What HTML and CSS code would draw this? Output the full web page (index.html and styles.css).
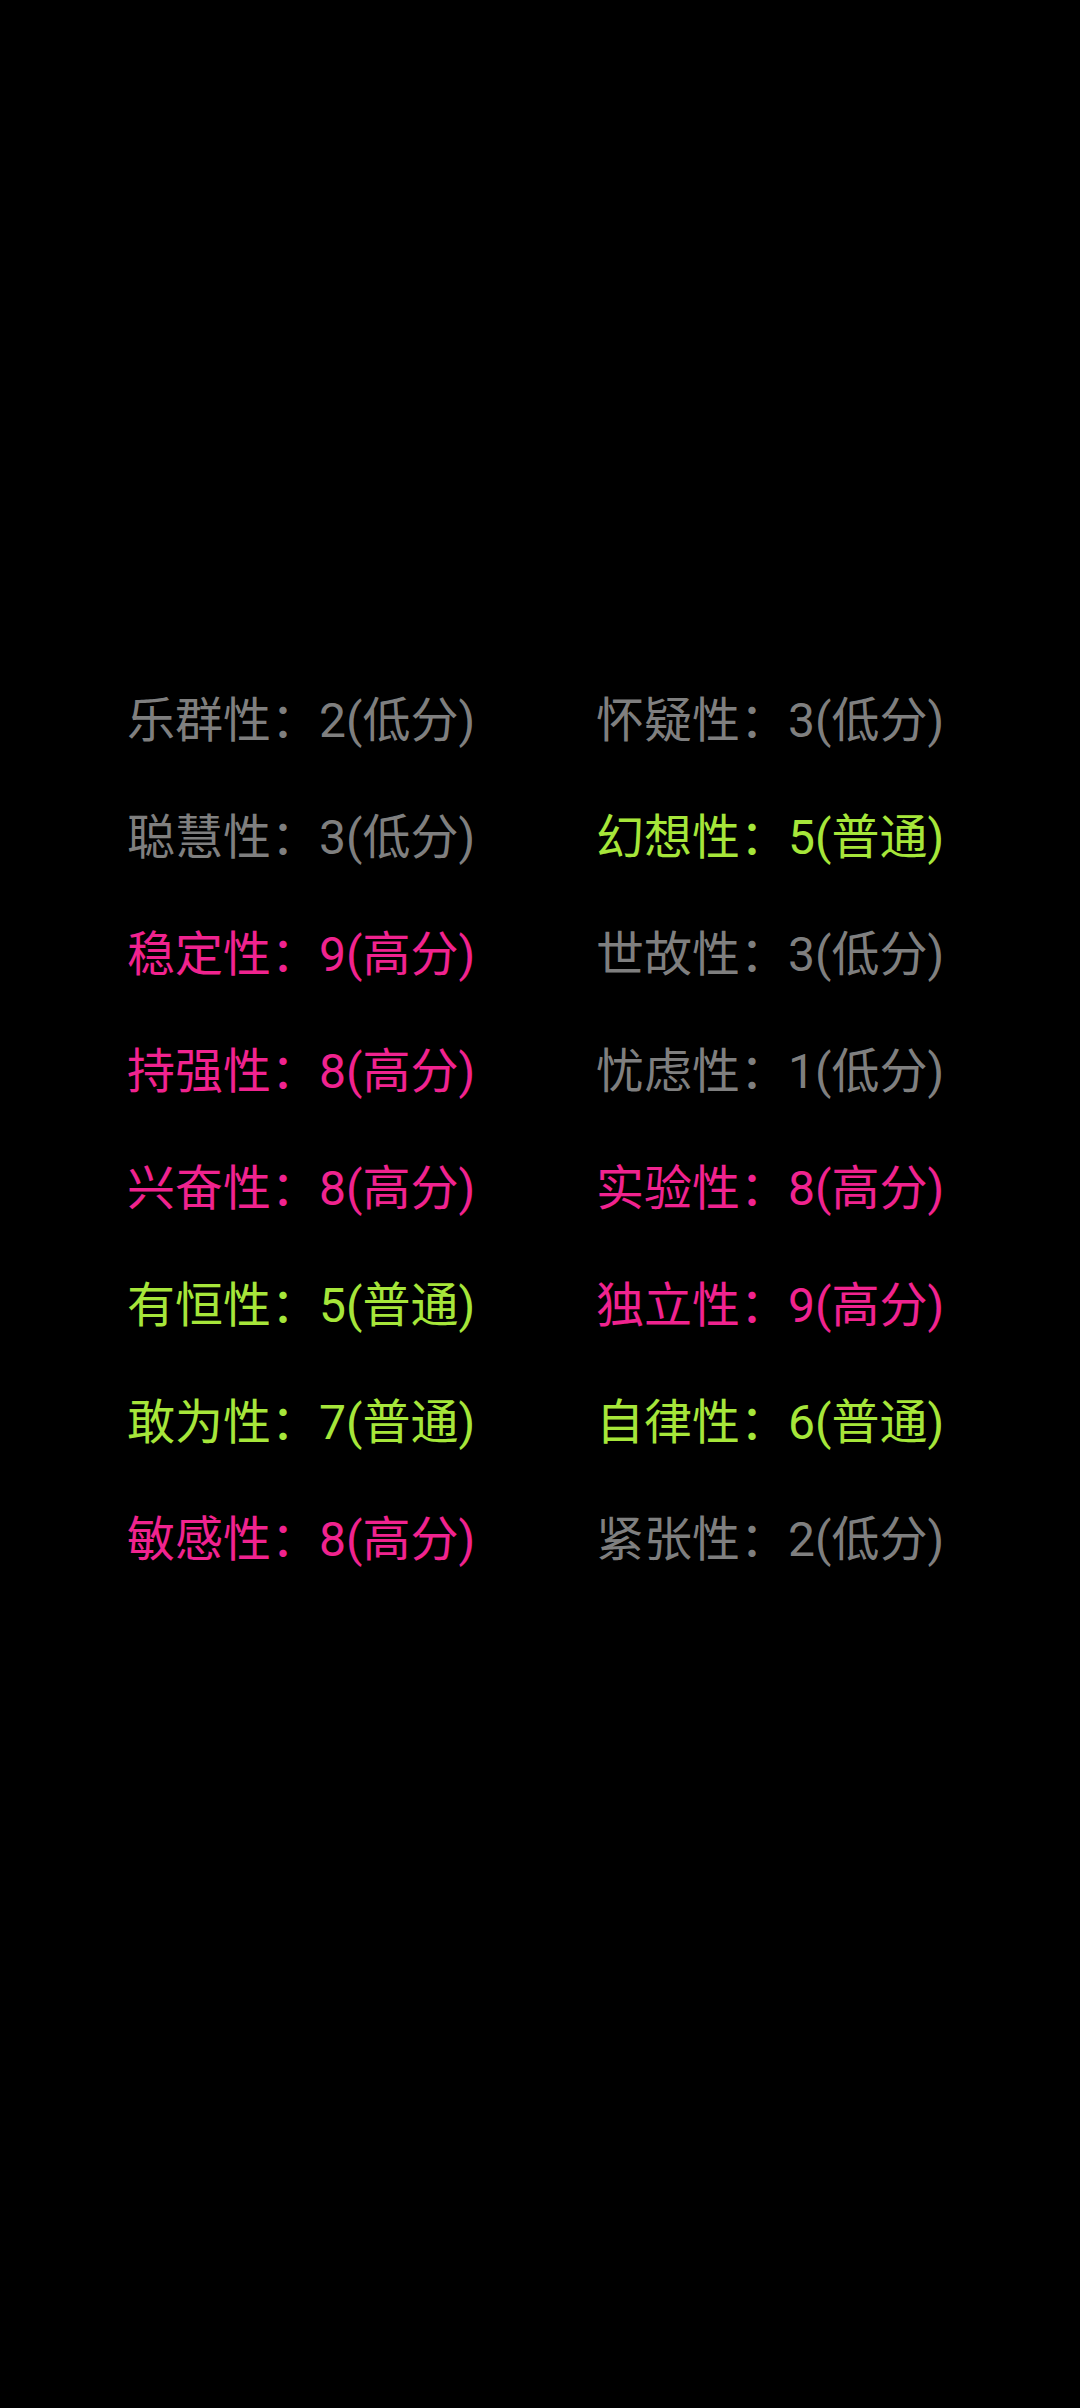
FILE: index.html
```html
<!DOCTYPE html>
<html lang="zh-CN">
<head>
<meta charset="utf-8">
<link rel="stylesheet" href="styles.css">
</head>
<body>
<div class="grid">
  <div class="item low">乐群性：2(低分)</div>
  <div class="item low">怀疑性：3(低分)</div>
  <div class="item low">聪慧性：3(低分)</div>
  <div class="item mid">幻想性：5(普通)</div>
  <div class="item high">稳定性：9(高分)</div>
  <div class="item low">世故性：3(低分)</div>
  <div class="item high">持强性：8(高分)</div>
  <div class="item low">忧虑性：1(低分)</div>
  <div class="item high">兴奋性：8(高分)</div>
  <div class="item high">实验性：8(高分)</div>
  <div class="item mid">有恒性：5(普通)</div>
  <div class="item high">独立性：9(高分)</div>
  <div class="item mid">敢为性：7(普通)</div>
  <div class="item mid">自律性：6(普通)</div>
  <div class="item high">敏感性：8(高分)</div>
  <div class="item low">紧张性：2(低分)</div>
</div>
</body>
</html>
```
FILE: styles.css
```css
html, body {
  margin: 0;
  padding: 0;
  background: #000;
  width: 1080px;
  height: 2408px;
  overflow: hidden;
}
.grid {
  display: grid;
  grid-template-columns: 469px 469px;
  grid-auto-rows: 117px;
  padding: 662px 0 0 127px;
  font-family: Roboto, "Noto Sans CJK SC", sans-serif;
  font-size: 48px;
}
.item {
  line-height: 117px;
  white-space: nowrap;
}
.low { color: #7f7f7f; }
.mid { color: #a6e63a; }
.high { color: #f0238f; }
```
